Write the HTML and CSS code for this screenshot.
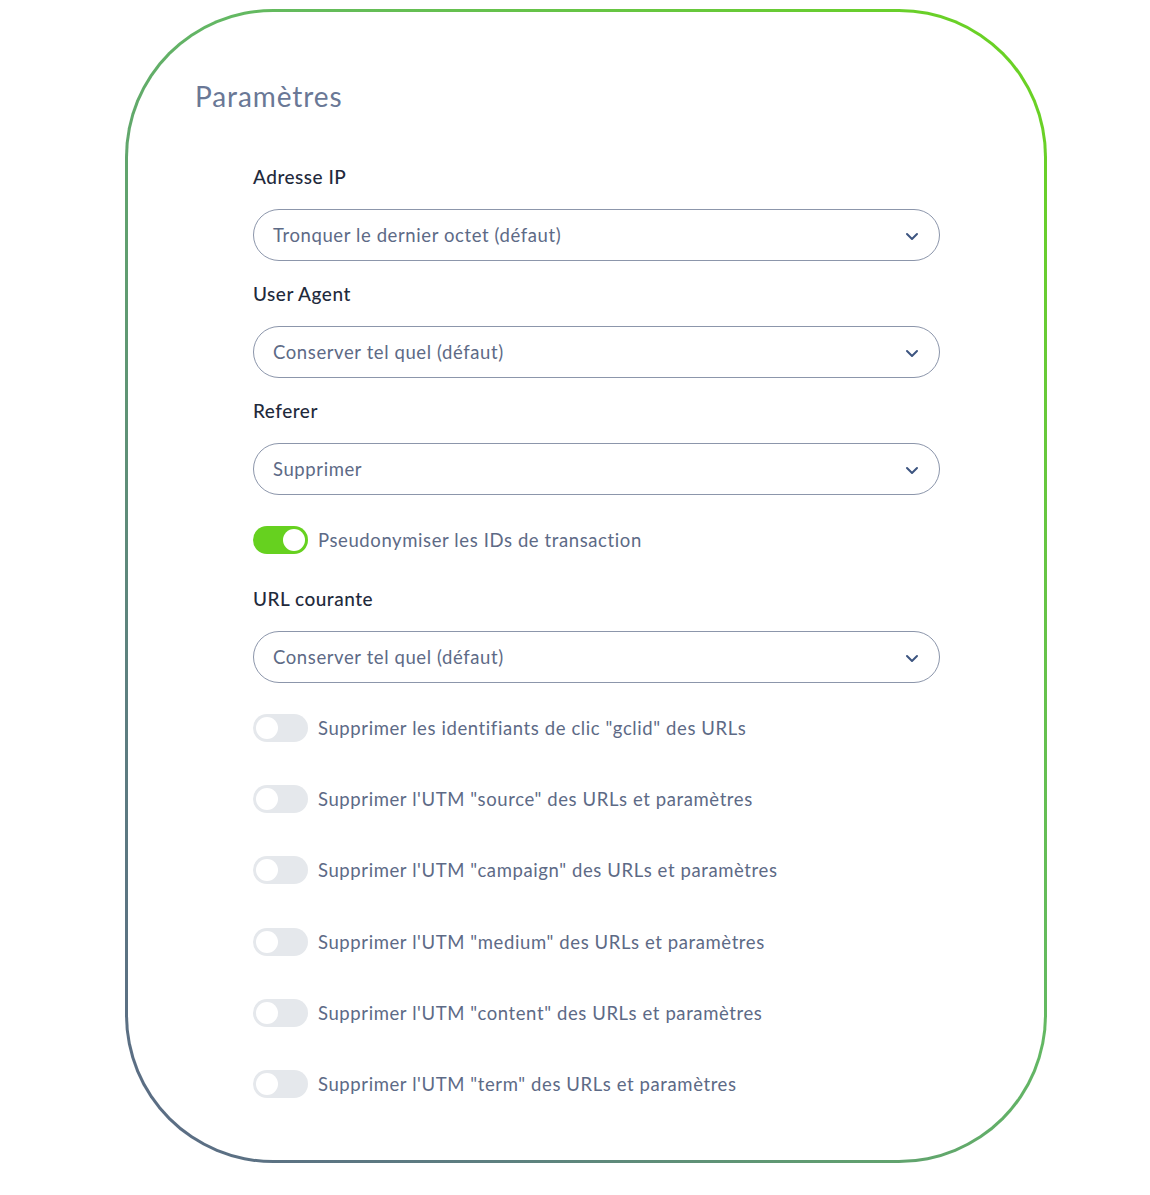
FILE: index.html
```html
<!DOCTYPE html>
<html lang="fr">
<head>
<meta charset="utf-8">
<title>Paramètres</title>
<link rel="stylesheet" href="styles.css">
</head>
<body>
<div class="card">
  <h1 class="title">Paramètres</h1>
  <div class="form">
    <div class="field-label">Adresse IP</div>
    <div class="select"><span class="select-value">Tronquer le dernier octet (défaut)</span><svg class="chev" width="14" height="9" viewBox="0 0 14 9"><path d="M2 2l5 5 5-5" fill="none" stroke="#3d5580" stroke-width="2" stroke-linecap="round" stroke-linejoin="round"/></svg></div>

    <div class="field-label">User Agent</div>
    <div class="select"><span class="select-value">Conserver tel quel (défaut)</span><svg class="chev" width="14" height="9" viewBox="0 0 14 9"><path d="M2 2l5 5 5-5" fill="none" stroke="#3d5580" stroke-width="2" stroke-linecap="round" stroke-linejoin="round"/></svg></div>

    <div class="field-label">Referer</div>
    <div class="select"><span class="select-value">Supprimer</span><svg class="chev" width="14" height="9" viewBox="0 0 14 9"><path d="M2 2l5 5 5-5" fill="none" stroke="#3d5580" stroke-width="2" stroke-linecap="round" stroke-linejoin="round"/></svg></div>

    <div class="switch-row single">
      <span class="switch on"><span class="knob"></span></span>
      <span class="switch-label">Pseudonymiser les IDs de transaction</span>
    </div>

    <div class="field-label">URL courante</div>
    <div class="select"><span class="select-value">Conserver tel quel (défaut)</span><svg class="chev" width="14" height="9" viewBox="0 0 14 9"><path d="M2 2l5 5 5-5" fill="none" stroke="#3d5580" stroke-width="2" stroke-linecap="round" stroke-linejoin="round"/></svg></div>

    <div class="switch-list">
      <div class="switch-row"><span class="switch"><span class="knob"></span></span><span class="switch-label">Supprimer les identifiants de clic "gclid" des URLs</span></div>
      <div class="switch-row"><span class="switch"><span class="knob"></span></span><span class="switch-label">Supprimer l'UTM "source" des URLs et paramètres</span></div>
      <div class="switch-row"><span class="switch"><span class="knob"></span></span><span class="switch-label">Supprimer l'UTM "campaign" des URLs et paramètres</span></div>
      <div class="switch-row"><span class="switch"><span class="knob"></span></span><span class="switch-label">Supprimer l'UTM "medium" des URLs et paramètres</span></div>
      <div class="switch-row"><span class="switch"><span class="knob"></span></span><span class="switch-label">Supprimer l'UTM "content" des URLs et paramètres</span></div>
      <div class="switch-row"><span class="switch"><span class="knob"></span></span><span class="switch-label">Supprimer l'UTM "term" des URLs et paramètres</span></div>
    </div>
  </div>
</div>
</body>
</html>
```
FILE: styles.css
```css
* { box-sizing: border-box; }
html, body { margin: 0; padding: 0; background: #ffffff; }
body {
  font-family: Lato, "Open Sans", "Liberation Sans", sans-serif;
  padding: 9px 0 0 125px;
}
.card {
  width: 922px;
  height: 1154px;
  border: 3px solid transparent;
  border-radius: 148px;
  background:
    linear-gradient(#ffffff, #ffffff) padding-box,
    linear-gradient(to bottom left, #6ad41e 0%, #63b863 45%, #5d7f80 80%, #5a6985 100%) border-box;
  padding: 66px 104px 0 67px;
}
.title {
  margin: 0;
  font-size: 28px;
  font-weight: 400;
  line-height: 36px;
  color: #6a7896;
  letter-spacing: 0.9px;
}
.form {
  display: flex;
  flex-direction: column;
  margin: 51px 0 0 58px;
}
.field-label {
  font-size: 19px;
  font-weight: 500;
  line-height: 24px;
  height: 24px;
  color: #1f2a3c;
  letter-spacing: 0.5px;
  margin-bottom: 20px;
}
.select {
  height: 52px;
  border: 1.5px solid #8c96ab;
  border-radius: 26px;
  display: flex;
  align-items: center;
  justify-content: space-between;
  padding: 0 20px 0 19px;
  margin-bottom: 21px;
}
.select-value {
  font-size: 18.5px;
  color: #5d6a86;
  letter-spacing: 0.6px;
}
.chev { display: block; margin-top: 3px; }
.switch-row {
  display: flex;
  align-items: center;
  height: 28px;
  gap: 10px;
}
.switch-row.single { margin: 10px 0 33px; }
.switch {
  position: relative;
  width: 55px;
  height: 28px;
  border-radius: 14px;
  background: #e5e8ec;
  flex: none;
}
.switch .knob {
  position: absolute;
  top: 3px;
  left: 3px;
  width: 22px;
  height: 22px;
  border-radius: 50%;
  background: #ffffff;
}
.switch.on { background: #66d11f; }
.switch.on .knob { left: 30px; }
.switch-label {
  font-size: 18.5px;
  color: #5d6a86;
  letter-spacing: 0.6px;
}
.switch-list {
  display: flex;
  flex-direction: column;
  gap: 43.2px;
  margin-top: 10px;
}
```
